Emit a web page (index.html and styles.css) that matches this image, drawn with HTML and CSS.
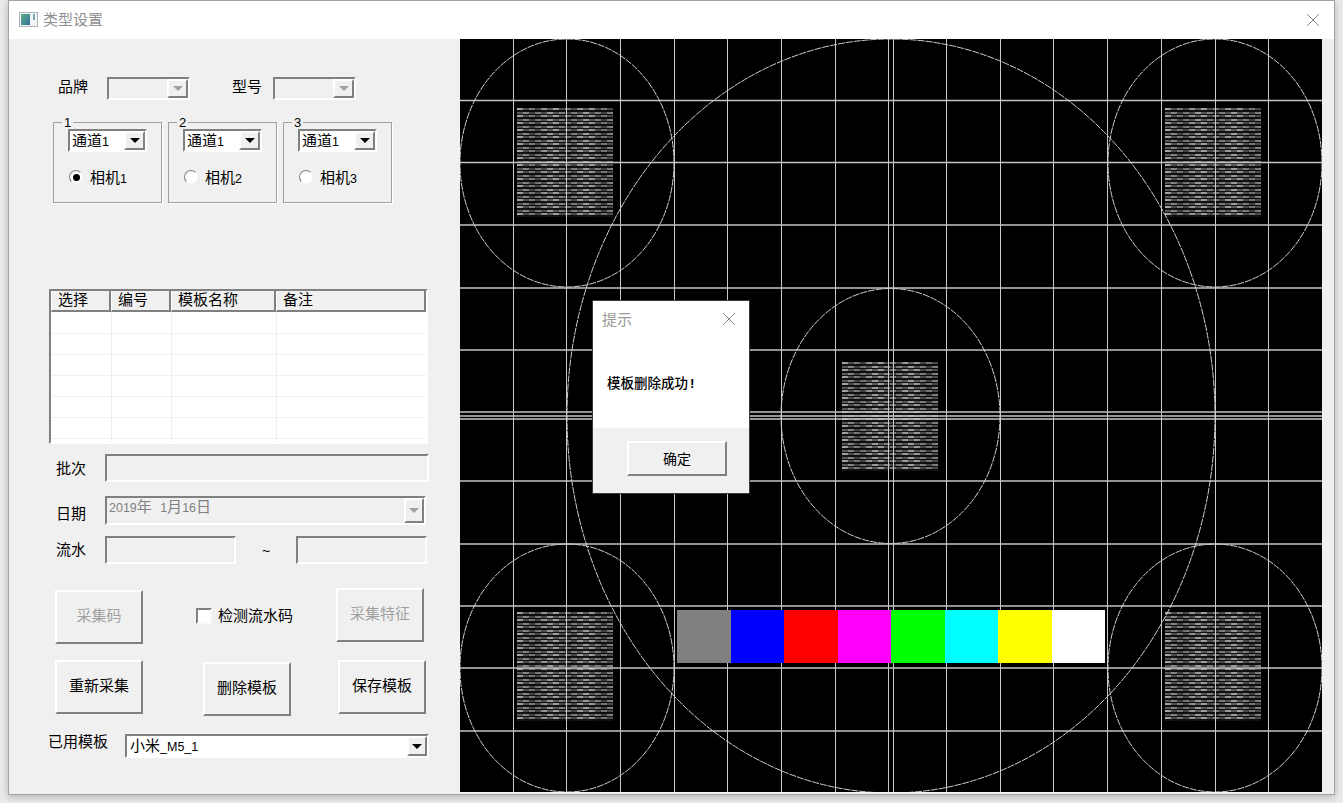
FILE: index.html
```html
<!DOCTYPE html>
<html lang="zh-CN">
<head>
  <meta charset="UTF-8">
  <title>类型设置</title>
  <link rel="stylesheet" href="styles.css">
</head>
<body>
  <div class="window">
    <div class="titlebar">
      <svg class="app-icon" width="19" height="15" viewBox="0 0 19 15">
        <defs>
          <linearGradient id="iconFill" x1="0" y1="0" x2="1" y2="1">
            <stop offset="0" stop-color="#5fb08c"/>
            <stop offset="1" stop-color="#2f6f96"/>
          </linearGradient>
        </defs>
        <rect x="0.5" y="0.5" width="18" height="14" fill="#f2f5f5" stroke="#aeb6ba"/>
        <rect x="2" y="2" width="9" height="11" fill="url(#iconFill)"/>
        <rect x="14" y="2" width="2" height="6" fill="#7fa5b0"/>
      </svg>
      <span class="title">类型设置</span>
      <svg class="close" width="14" height="14" viewBox="0 0 14 14">
        <path d="M1 1L13 13M13 1L1 13" stroke="#8a8a8a" fill="none"/>
      </svg>
    </div>

    <div class="main">
      <div class="panel">
        <div class="row-brand">
          <label class="brand-label">品牌</label>
          <div class="combo combo-brand is-disabled"><span class="combo-text"></span><span class="combo-btn"><i></i></span></div>
          <label class="brand-label model-label">型号</label>
          <div class="combo combo-brand is-disabled"><span class="combo-text"></span><span class="combo-btn"><i></i></span></div>
        </div>

        <div class="groups">
          <div class="group">
            <span class="legend">1</span>
            <div class="combo combo-channel"><span class="combo-text">通道<small>1</small></span><span class="combo-btn"><i></i></span></div>
            <div class="radio-row"><span class="radio is-on"></span><span>相机<small>1</small></span></div>
          </div>
          <div class="group">
            <span class="legend">2</span>
            <div class="combo combo-channel"><span class="combo-text">通道<small>1</small></span><span class="combo-btn"><i></i></span></div>
            <div class="radio-row"><span class="radio"></span><span>相机<small>2</small></span></div>
          </div>
          <div class="group">
            <span class="legend">3</span>
            <div class="combo combo-channel"><span class="combo-text">通道<small>1</small></span><span class="combo-btn"><i></i></span></div>
            <div class="radio-row"><span class="radio"></span><span>相机<small>3</small></span></div>
          </div>
        </div>

        <div class="list">
          <table>
            <colgroup>
              <col class="col-a"><col class="col-a"><col class="col-b"><col>
            </colgroup>
            <thead>
              <tr><th>选择</th><th>编号</th><th>模板名称</th><th>备注</th></tr>
            </thead>
            <tbody>
              <tr><td></td><td></td><td></td><td></td></tr>
              <tr><td></td><td></td><td></td><td></td></tr>
              <tr><td></td><td></td><td></td><td></td></tr>
              <tr><td></td><td></td><td></td><td></td></tr>
              <tr><td></td><td></td><td></td><td></td></tr>
              <tr><td></td><td></td><td></td><td></td></tr>
              <tr><td></td><td></td><td></td><td></td></tr>
            </tbody>
          </table>
        </div>

        <div class="field-row row-batch">
          <label class="field-label batch-label">批次</label>
          <div class="sunken batch-input"></div>
        </div>

        <div class="field-row row-date">
          <label class="field-label date-label">日期</label>
          <div class="combo combo-date is-disabled"><span class="combo-text date-text"><small>2019</small>年&nbsp;&nbsp;<small>1</small>月<small>16</small>日</span><span class="combo-btn"><i></i></span></div>
        </div>

        <div class="field-row row-serial">
          <label class="field-label">流水</label>
          <div class="sunken serial-input"></div>
          <span class="tilde">~</span>
          <div class="sunken serial-input"></div>
        </div>

        <div class="btn-row row-capture">
          <button class="btn nudge" disabled>采集码</button>
          <label class="check"><span class="checkbox"></span><span class="check-text">检测流水码</span></label>
          <button class="btn btn-feature" disabled>采集特征</button>
        </div>

        <div class="btn-row row-actions">
          <button class="btn">重新采集</button>
          <button class="btn btn-delete nudge">删除模板</button>
          <button class="btn btn-save">保存模板</button>
        </div>

        <div class="row-used">
          <label class="used-label">已用模板</label>
          <div class="combo combo-used"><span class="combo-text">小米<small>_M5_1</small></span><span class="combo-btn"><i></i></span></div>
        </div>
      </div>

      <div class="canvas">
        <svg class="chart" width="862" height="753" viewBox="460 39 862 753">
          <defs>
            <pattern id="stripes" x="0" y="0" width="12" height="7" patternUnits="userSpaceOnUse">
              <rect width="12" height="7" fill="#141414"/>
              <rect x="0" y="0" width="6" height="2" fill="#ababab"/>
              <rect x="6" y="0" width="6" height="2" fill="#5c5c5c"/>
              <rect x="0" y="4" width="6" height="2" fill="#5c5c5c"/>
              <rect x="6" y="4" width="6" height="2" fill="#a0a0a0"/>
            </pattern>
            <linearGradient id="shade" spreadMethod="repeat" x1="0" y1="0" x2="0.36" y2="0">
              <stop offset="0" stop-color="#000" stop-opacity="0"/>
              <stop offset="0.5" stop-color="#000" stop-opacity="0.35"/>
              <stop offset="1" stop-color="#000" stop-opacity="0"/>
            </linearGradient>
            <g id="target">
              <rect width="96" height="109" fill="url(#stripes)"/>
              <rect width="96" height="109" fill="url(#shade)"/>
            </g>
          </defs>
          <rect x="460" y="39" width="862" height="753" fill="#000"/>

          <use href="#target" x="517" y="108"/>
          <use href="#target" x="1165" y="108"/>
          <use href="#target" x="842" y="362"/>
          <use href="#target" x="517" y="612"/>
          <use href="#target" x="1165" y="612"/>

          <g class="grid-v">
            <path d="M513.5 39V792M566.5 39V792M620.5 39V792M674.5 39V792M727.5 39V792M781.5 39V792M835.5 39V792M888.5 39V792M893.5 39V792M946.5 39V792M1000.5 39V792M1053.5 39V792M1107.5 39V792M1161.5 39V792M1215.5 39V792M1268.5 39V792"/>
          </g>
          <g class="grid-h">
            <path d="M460 100.5H1322M460 162.5H1322M460 225H1322M460 288H1322M460 350H1322M460 412H1322M460 416H1322M460 419H1322M460 481H1322M460 544H1322M460 606H1322M460 668H1322M460 731H1322"/>
          </g>

          <g class="rings">
            <ellipse cx="891" cy="416" rx="324" ry="377"/>
            <ellipse cx="567" cy="163" rx="107" ry="124"/>
            <ellipse cx="1215" cy="163" rx="107" ry="124"/>
            <ellipse cx="567" cy="668" rx="107" ry="124"/>
            <ellipse cx="1215" cy="668" rx="107" ry="124"/>
            <ellipse cx="890.500" cy="416" rx="109.500" ry="127.500"/>
          </g>

          <rect x="677" y="610" width="54" height="53" fill="#808080"/>
          <rect x="731" y="610" width="53" height="53" fill="#0000ff"/>
          <rect x="784" y="610" width="54" height="53" fill="#ff0000"/>
          <rect x="838" y="610" width="53" height="53" fill="#ff00ff"/>
          <rect x="891" y="610" width="54" height="53" fill="#00ff00"/>
          <rect x="945" y="610" width="53" height="53" fill="#00ffff"/>
          <rect x="998" y="610" width="54" height="53" fill="#ffff00"/>
          <rect x="1052" y="610" width="53" height="53" fill="#ffffff"/>
        </svg>

        <div class="dialog">
          <div class="dialog-head">
            <span class="dialog-title">提示</span>
            <svg width="14" height="14" viewBox="0 0 14 14">
              <path d="M1 1L13 13M13 1L1 13" stroke="#8a8a8a" fill="none"/>
            </svg>
          </div>
          <div class="dialog-body">模板删除成功<span class="bang">!</span></div>
          <div class="dialog-foot">
            <button class="btn btn-ok">确定</button>
          </div>
        </div>
      </div>
    </div>
  </div>
</body>
</html>
```

FILE: styles.css
```css
* {
  box-sizing: border-box;
}
html, body {
  margin: 0;
  height: 100%;
  overflow: hidden;
}
body {
  background-color: #ececec;
  font-family: "Liberation Sans", "Noto Sans CJK SC", sans-serif;
  font-size: 15px;
  color: #000;
  padding-left: 8px;
}
small {
  font-size: 12.5px;
}

.window {
  width: 1327px;
  height: 795px;
  border: 1px solid #a3a3a3;
  background-color: #f0f0f0;
  box-shadow: 0 2px 8px rgba(0, 0, 0, 0.25);
}
.titlebar {
  display: flex;
  align-items: center;
  height: 38px;
  padding-left: 10px;
  background-color: #fff;
}
.app-icon {
  margin-right: 5px;
  margin-bottom: 1px;
}
.title {
  margin-bottom: 4px;
  color: #8f8f8f;
}
.close {
  margin-left: auto;
  margin-right: 14px;
  margin-top: -1px;
}

.main {
  display: flex;
  height: 755px;
}
.panel {
  width: 451px;
  padding-top: 38px;
}

/* sunken / raised win32 look */
.sunken {
  border: 2px solid;
  border-color: #808080 #fff #fff #808080;
  background-color: #f0f0f0;
}
.combo {
  display: flex;
  align-items: center;
  border: 2px solid;
  border-color: #808080 #fff #fff #808080;
  background-color: #fff;
  line-height: 18px;
}
.combo-text {
  flex: 1;
  padding-left: 2px;
  white-space: nowrap;
  overflow: hidden;
}
.combo-btn {
  display: flex;
  align-items: center;
  justify-content: center;
  width: 21px;
  height: 100%;
  background-color: #f0f0f0;
  border: 2px solid;
  border-color: #fff #808080 #808080 #fff;
}
.combo-btn i {
  border: 5px solid transparent;
  border-top: 5px solid #000;
  border-bottom: 0;
}
.combo.is-disabled {
  background-color: #f0f0f0;
}
.combo.is-disabled .combo-btn i {
  border-top-color: #a0a0a0;
}

.row-brand {
  display: flex;
  align-items: center;
  height: 23px;
  padding-left: 49px;
}
.brand-label {
  width: 49px;
  line-height: 20px;
  margin-bottom: 4px;
}
.model-label {
  width: 41px;
  margin-left: 42px;
}
.combo-brand {
  width: 83px;
  height: 23px;
}

.groups {
  display: flex;
  gap: 6px;
  margin-top: 22px;
  padding-left: 44px;
}
.group {
  width: 109px;
  height: 81px;
  padding-left: 14px;
  border: 1px solid #a0a0a0;
  box-shadow: 1px 1px 0 #fff;
}
.legend {
  display: block;
  width: fit-content;
  height: 12px;
  margin: -7px 0 0 -6px;
  padding: 0 2px;
  font-size: 13px;
  line-height: 14px;
  background-color: #f0f0f0;
}
.combo-channel {
  width: 79px;
  height: 23px;
  margin-top: 1px;
}
.combo-channel .combo-text {
  padding-top: 2px;
}
.radio-row {
  display: flex;
  align-items: center;
  height: 20px;
  margin-top: 15px;
}
.radio-row span:last-child {
  margin-bottom: 2px;
}
.radio {
  display: flex;
  align-items: center;
  justify-content: center;
  width: 14px;
  height: 14px;
  margin: 0 7px 0 1px;
  border: 1px solid;
  border-color: #808080 #f8f8f8 #f8f8f8 #808080;
  border-radius: 50%;
  background-color: #fff;
}
.radio.is-on::after {
  content: "";
  width: 7px;
  height: 7px;
  border-radius: 50%;
  background-color: #000;
}

.list {
  width: 379px;
  height: 155px;
  margin: 86px 0 0 40px;
  border: 2px solid;
  border-color: #808080 #fff #fff #808080;
  background-color: #fff;
  overflow: hidden;
}
.list table {
  width: 375px;
  table-layout: fixed;
  border-collapse: separate;
  border-spacing: 0;
}
.col-a {
  width: 60px;
}
.col-b {
  width: 105px;
}
.list th {
  height: 21px;
  padding: 0 0 1px 6px;
  font-weight: normal;
  line-height: 18px;
  text-align: left;
  background-color: #f0f0f0;
  border-right: 2px solid #808080;
  border-bottom: 2px solid #808080;
  border-left: 1px solid #fff;
}
.list td {
  height: 21px;
  padding: 0;
  border-bottom: 1px solid #f0f0f0;
}
.list td + td {
  border-left: 1px solid #f0f0f0;
}
.list tbody tr:first-child td {
  height: 22px;
}

.field-row {
  display: flex;
  align-items: center;
  padding-left: 47px;
}
.field-label {
  width: 49px;
  line-height: 20px;
}
.row-batch {
  margin-top: 10px;
}
.batch-label {
  margin-top: 2px;
}
.batch-input {
  width: 324px;
  height: 28px;
}
.row-date {
  margin-top: 14px;
}
.date-label {
  margin-top: 6px;
}
.combo-date {
  width: 321px;
  height: 29px;
  align-items: flex-start;
}
.date-text {
  padding-left: 2px;
  color: #808080;
}
.row-date .combo-btn {
  width: 20px;
  align-self: stretch;
  height: auto;
}
.row-serial {
  margin-top: 11px;
}
.serial-input {
  width: 131px;
  height: 28px;
}
.tilde {
  width: 60px;
  padding-top: 1px;
  text-align: center;
  font-size: 14px;
}

.btn {
  width: 88px;
  height: 54px;
  padding: 0 0 6px;
  font: inherit;
  color: #000;
  background-color: #f0f0f0;
  border: 2px solid;
  border-color: #fff #808080 #808080 #fff;
}
.btn:disabled {
  color: #a0a0a0;
}
.btn-row {
  display: flex;
  align-items: flex-start;
  height: 56px;
  padding-left: 46px;
}
.nudge {
  margin-top: 2px;
}
.row-capture {
  margin-top: 24px;
}
.row-actions {
  margin-top: 16px;
}
.check {
  display: flex;
  align-items: flex-start;
  width: 96px;
  height: 20px;
  margin: 20px 0 0 53px;
  white-space: nowrap;
}
.check-text {
  margin-top: -4px;
}
.checkbox {
  flex: none;
  width: 16px;
  height: 16px;
  margin-right: 6px;
  background-color: #fff;
  border: 2px solid;
  border-color: #808080 #f8f8f8 #f8f8f8 #808080;
}
.btn-feature {
  margin-left: 44px;
}
.btn-delete {
  margin-left: 60px;
}
.btn-save {
  margin-left: 47px;
}

.row-used {
  display: flex;
  align-items: flex-start;
  margin-top: 18px;
  padding-left: 39px;
}
.used-label {
  width: 77px;
  line-height: 16px;
}
.combo-used {
  width: 304px;
  height: 24px;
}
.combo-used .combo-text {
  padding-left: 3px;
}
.combo-used .combo-btn {
  width: 20px;
}

/* picture area */
.canvas {
  position: relative;
  width: 862px;
  height: 753px;
  background-color: #000;
}
.chart {
  display: block;
}
.grid-v path {
  fill: none;
  stroke: #c8c8c8;
  stroke-width: 1;
}
.grid-h path {
  fill: none;
  stroke: #c4c4c4;
  stroke-width: 1.5;
}
.rings ellipse {
  fill: none;
  stroke: #cfcfcf;
  stroke-width: 1;
  stroke-dasharray: 7 1;
}

.dialog {
  position: absolute;
  left: 132px;
  top: 261px;
  width: 158px;
  height: 194px;
  border: 1px solid #3a3a3a;
  background-color: #fff;
  display: flex;
  flex-direction: column;
}
.dialog-head {
  display: flex;
  align-items: center;
  justify-content: space-between;
  height: 36px;
  padding: 0 13px 0 9px;
  color: #9a9a9a;
}
.dialog-title {
  margin-bottom: 2px;
}
.dialog-body {
  height: 91px;
  padding: 36px 0 0 14px;
  font-size: 13.500px;
  font-weight: 500;
  line-height: 22px;
  white-space: nowrap;
}
.bang {
  padding-left: 2px;
  font-weight: 700;
}
.dialog-foot {
  flex: 1;
  padding: 13px 0 0 34px;
  background-color: #f0f0f0;
}
.btn-ok {
  width: 100px;
  height: 35px;
  padding: 0 0 2px;
  font-size: 14px;
}
```
